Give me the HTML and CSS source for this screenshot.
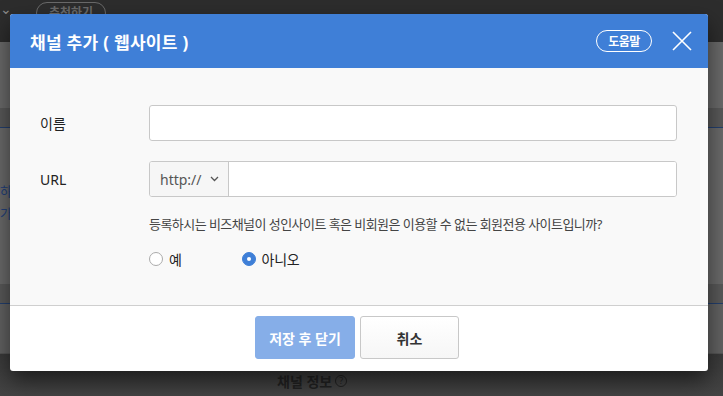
FILE: index.html
```html
<!DOCTYPE html>
<html lang="ko">
<head>
  <meta charset="UTF-8" />
  <meta name="viewport" content="width=device-width, initial-scale=1" />
  <title>채널 추가</title>
  <link rel="stylesheet" href="styles.css">
</head>
<body>
  <!-- dimmed page behind the dialog -->
  <div class="page" aria-hidden="true">
    <header class="topbar">
      <span class="topbar-caret">&#8964;</span>
      <span class="recommend">추천하기</span>
    </header>
    <section class="band band-top"></section>
    <section class="band band-head"></section>
    <section class="band band-main">
      <p class="frag">하고</p>
      <p class="frag">가능</p>
    </section>
    <section class="band band-head"></section>
    <section class="band band-mid"></section>
    <section class="band band-foot">
      <h4 class="section-title">채널 정보 <span class="qmark">?</span></h4>
    </section>
  </div>

  <div class="modal" role="dialog" aria-label="채널 추가 ( 웹사이트 )">
    <div class="modal-header">
      <h2>채널 추가 ( 웹사이트 )</h2>
      <button class="help-btn">도움말</button>
      <button class="close-btn" aria-label="닫기">
        <svg width="20" height="20" viewBox="0 0 20 20">
          <path d="M1 1 L19 19 M19 1 L1 19" stroke="#fff" stroke-width="1.6" fill="none"/>
        </svg>
      </button>
    </div>

    <div class="modal-body">
      <label class="field-label" for="name">이름</label>
      <input id="name" class="text-input" type="text">

      <label class="field-label" for="url">URL</label>
      <div class="url-group">
        <div class="protocol">
          http://
          <svg width="9" height="6" viewBox="0 0 9 6"><path d="M1 1 L4.5 4.5 L8 1" stroke="#555" stroke-width="1.3" fill="none"/></svg>
        </div>
        <input id="url" class="url-input" type="text">
      </div>

      <div></div>
      <div class="question">
        <p>등록하시는 비즈채널이 성인사이트 혹은 비회원은 이용할 수 없는 회원전용 사이트입니까?</p>
        <div class="radios">
          <label class="radio"><span class="dot"></span>예</label>
          <label class="radio checked"><span class="dot"></span>아니오</label>
        </div>
      </div>
    </div>

    <div class="modal-footer">
      <button class="btn btn-primary">저장 후 닫기</button>
      <button class="btn btn-default">취소</button>
    </div>
  </div>
</body>
</html>
```

FILE: styles.css
```css
* {
  box-sizing: border-box;
  margin: 0;
  padding: 0;
}
body {
  font-family: 'Noto Sans', 'Noto Sans CJK KR', sans-serif;
  background: #5e5e5e;
  width: 723px;
  height: 396px;
  overflow: hidden;
  position: relative;
}

/* Page behind the overlay */
.page {
  display: flex;
  flex-direction: column;
  height: 100%;
}
.topbar {
  height: 42px;
  background: #2d2d2d;
  display: flex;
  align-items: flex-start;
  padding-top: 2px;
  gap: 24px;
}
.topbar-caret {
  color: #8a8a8a;
  font-size: 14px;
  line-height: 14px;
}
.recommend {
  border: 1px solid #6a6a6a;
  border-radius: 12px;
  color: #6a6a6a;
  font-size: 12px;
  font-weight: 700;
  padding: 1px 12px;
  line-height: 18px;
}
.band { background: #6a6a6a; }
.band-top { height: 66px; }
.band-head {
  height: 20px;
  background: #595959;
  border-bottom: 1px solid #233f6e;
}
.band-main {
  height: 156px;
  padding-top: 52px;
}
.frag {
  color: #22407a;
  font-size: 13px;
  line-height: 22px;
}
.band-mid {
  height: 50px;
  background: #626262;
  border-bottom: 1px solid #555;
}
.band-foot {
  flex: 1;
  background: linear-gradient(#3a3a3a, #444);
  padding: 17px 0 0 277px;
}
.section-title {
  font-size: 14px;
  color: #222;
  font-weight: 700;
  display: flex;
  align-items: center;
  gap: 3px;
}
.qmark {
  width: 12px;
  height: 12px;
  border: 1px solid #222;
  border-radius: 50%;
  font-size: 9px;
  line-height: 10px;
  text-align: center;
  font-weight: 400;
}

/* Dialog */
.modal {
  position: absolute;
  top: 14px;
  left: 10px;
  width: 698px;
  border-radius: 3px;
  overflow: hidden;
  background: #fff;
  box-shadow: 0 10px 22px rgba(0, 0, 0, 0.55);
}
.modal-header {
  height: 54px;
  background: #3f7fd7;
  display: flex;
  align-items: center;
  padding: 0 16px 0 20px;
}
.modal-header h2 {
  flex: 1;
  color: #fff;
  font-size: 17px;
  font-weight: 700;
  letter-spacing: 0.3px;
}
.help-btn {
  height: 22px;
  width: 56px;
  border: 1px solid #fff;
  border-radius: 11px;
  background: transparent;
  color: #fff;
  font-family: inherit;
  font-size: 12px;
  font-weight: 700;
  letter-spacing: -0.5px;
  margin-right: 20px;
}
.close-btn {
  background: none;
  border: none;
  width: 20px;
  height: 20px;
  display: flex;
}

.modal-body {
  background: #f9f9f9;
  border-bottom: 1px solid #cfcfcf;
  height: 238px;
  padding: 37px 31px 0 30px;
  display: grid;
  grid-template-columns: 109px 1fr;
  align-content: start;
  row-gap: 20px;
  align-items: center;
}
.field-label {
  font-size: 14px;
  color: #222;
}
.text-input,
.url-group {
  height: 36px;
  border: 1px solid #c8c8c8;
  border-radius: 3px;
  background: #fff;
}
.url-group {
  display: flex;
  overflow: hidden;
}
.protocol {
  width: 79px;
  background: #f6f6f6;
  border-right: 1px solid #c8c8c8;
  display: flex;
  align-items: center;
  gap: 8px;
  padding-left: 10px;
  font-size: 14px;
  color: #555;
}
.url-input {
  flex: 1;
  border: none;
  background: #fff;
}
.question {
  margin-top: -2px;
}
.question p {
  font-size: 13px;
  letter-spacing: -0.55px;
  color: #444;
  line-height: 18px;
}
.radios {
  display: flex;
  gap: 60px;
  margin-top: 16px;
}
.radio {
  display: flex;
  align-items: center;
  gap: 6px;
  font-size: 14px;
  color: #222;
  letter-spacing: -0.3px;
}
.dot {
  width: 14px;
  height: 14px;
  border-radius: 50%;
  border: 1px solid #aaa;
  background: #fff;
  position: relative;
}
.radio.checked .dot {
  border-color: #3f7fd7;
  background: #3f7fd7;
}
.radio.checked .dot::after {
  content: '';
  position: absolute;
  top: 4px;
  left: 4px;
  width: 4px;
  height: 4px;
  border-radius: 50%;
  background: #fff;
}

.modal-footer {
  height: 65px;
  display: flex;
  justify-content: center;
  gap: 5px;
  padding-top: 10px;
  padding-right: 4px;
}
.btn {
  width: 100px;
  height: 43px;
  border-radius: 3px;
  font-family: inherit;
  font-size: 14px;
  font-weight: 700;
}
.btn-primary {
  background: #86aee8;
  border: 1px solid #86aee8;
  color: #fff;
}
.btn-default {
  width: 99px;
  background: linear-gradient(#fff, #f6f6f6);
  border: 1px solid #c8c8c8;
  color: #333;
}
```
